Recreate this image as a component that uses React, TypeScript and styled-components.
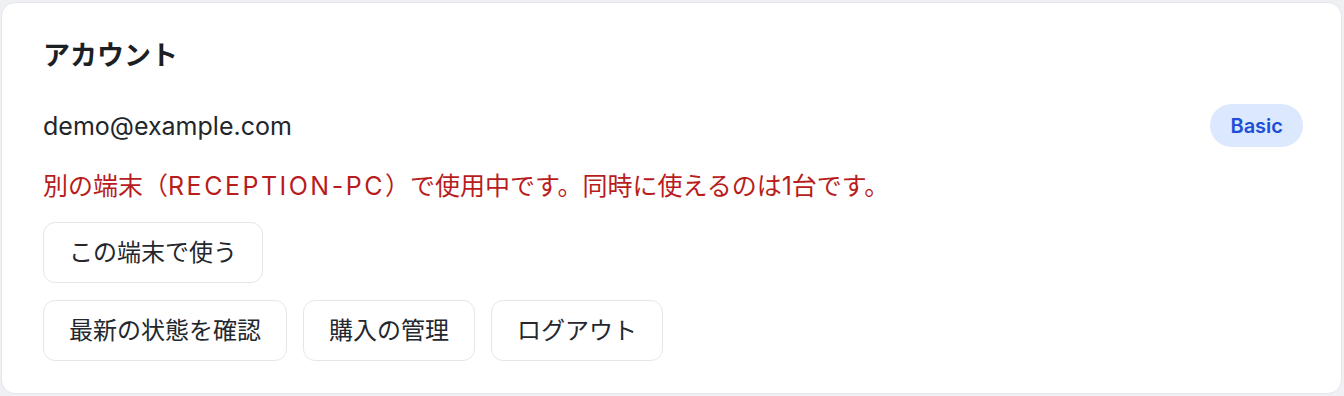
import styled, { createGlobalStyle } from "styled-components";

const GlobalStyle = createGlobalStyle`
    html, body {
        margin: 0;
        padding: 0;
        background: #eef0f4;
    }
    body {
        padding: 2px 2px 2px 1px;
        font-family: Inter, "Noto Sans CJK JP", sans-serif;
        color: #1f2329;
    }
    * {
        box-sizing: border-box;
    }
`;

const Card = styled.section`
    background: #ffffff;
    border: 1px solid #e3e6eb;
    border-radius: 14px;
    padding: 35px 41px 32px;
    display: flex;
    flex-direction: column;
    min-height: 392px;
`;

const Title = styled.h2`
    margin: 0;
    font-size: 27px;
    line-height: 36px;
    font-weight: 700;
    color: #1c1f24;
`;

const AccountRow = styled.div`
    margin-top: 30px;
    display: flex;
    align-items: center;
    justify-content: space-between;
    height: 43px;
`;

const Email = styled.span`
    font-size: 25px;
    color: #22262b;
`;

const PlanBadge = styled.span`
    display: inline-flex;
    align-items: center;
    height: 43px;
    padding: 0 20px;
    margin-right: -3px;
    border-radius: 999px;
    background: #dbe8fe;
    color: #1d4ed8;
    font-size: 20px;
    font-weight: 600;
`;

const Warning = styled.p`
    margin: 21px 0 0;
    font-size: 25px;
    line-height: 36px;
    color: #b91c1c;
`;

const Latin = styled.span`
    letter-spacing: 0.1em;
`;

const ButtonRow = styled.div<{ $top: number }>`
    margin-top: ${(p) => p.$top}px;
    display: flex;
    gap: 16px;
`;

const Action = styled.button`
    font-family: inherit;
    font-size: 24px;
    line-height: 35px;
    padding: 12px 25px;
    color: #24282e;
    background: #ffffff;
    border: 1px solid #e3e6eb;
    border-radius: 12px;
    cursor: pointer;
    &:hover {
        background: #f7f8fa;
    }
`;

const App = () => {
    return (
        <>
            <GlobalStyle />
            <Card>
                <Title>アカウント</Title>
                <AccountRow>
                    <Email>demo@example.com</Email>
                    <PlanBadge>Basic</PlanBadge>
                </AccountRow>
                <Warning>
                    別の端末（<Latin>RECEPTION-PC</Latin>）で使用中です。同時に使えるのは1台です。
                </Warning>
                <ButtonRow $top={18}>
                    <Action>この端末で使う</Action>
                </ButtonRow>
                <ButtonRow $top={17}>
                    <Action>最新の状態を確認</Action>
                    <Action>購入の管理</Action>
                    <Action>ログアウト</Action>
                </ButtonRow>
            </Card>
        </>
    );
};

export default App;
